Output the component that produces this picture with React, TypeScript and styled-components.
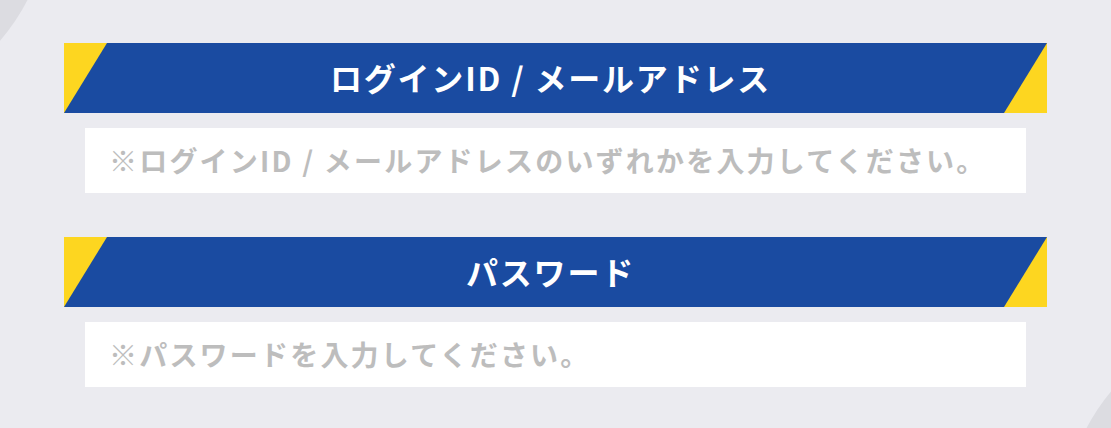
import React from "react";
import styled, { createGlobalStyle } from "styled-components";

const GlobalStyle = createGlobalStyle`
  html, body {
    margin: 0;
    padding: 0;
    background: #ebebf0;
  }
  body {
    font-family: "Noto Sans CJK JP", "Noto Sans", sans-serif;
  }
`;

const Page = styled.div`
  position: relative;
  width: 1111px;
  height: 428px;
  overflow: hidden;
  background: #ebebf0;
  box-sizing: border-box;
  padding: 43px 64px 0 64px;
  display: flex;
  flex-direction: column;
  gap: 44px;

  /* soft decorative discs peeking in at opposite corners */
  &::before,
  &::after {
    content: "";
    position: absolute;
    width: 398px;
    height: 398px;
    border-radius: 50%;
    background: #dcdce1;
  }
  &::before {
    left: -349px;
    top: -289px;
  }
  &::after {
    left: 1064px;
    top: 321px;
  }
`;

const Field = styled.div`
  position: relative;
  z-index: 1;
  display: flex;
  flex-direction: column;
  gap: 15px;
`;

const Heading = styled.label`
  position: relative;
  height: 70px;
  background: #1a4ba1;
  color: #ffffff;
  display: flex;
  align-items: center;
  justify-content: center;
  padding-right: 10px;
  font-size: 32px;
  font-weight: 700;
  letter-spacing: 1.8px;
  overflow: hidden;

  &::before,
  &::after {
    content: "";
    position: absolute;
    width: 43px;
    height: 70px;
    background: #fdd620;
  }
  &::before {
    left: 0;
    top: 0;
    clip-path: polygon(0 0, 100% 0, 0 100%);
  }
  &::after {
    right: 0;
    top: 0;
    clip-path: polygon(100% 0, 100% 100%, 0 100%);
  }
`;

const HeadingText = styled.span`
  position: relative;
  top: -1px;
`;

const InputRow = styled.div`
  padding: 0 21px;
`;

const TextInput = styled.input`
  display: block;
  width: 100%;
  height: 65px;
  box-sizing: border-box;
  border: none;
  outline: none;
  background: #ffffff;
  padding: 0 0 1px 24px;
  font-family: "Noto Sans CJK JP", "Noto Sans", sans-serif;
  font-size: 28px;
  font-weight: 700;
  letter-spacing: 2.2px;
  color: #333;

  &::placeholder {
    color: #bdbdbd;
  }
`;

export default function App() {
  return (
    <>
      <GlobalStyle />
      <Page>
        <Field>
          <Heading htmlFor="login-id">
            <HeadingText>ログインID / メールアドレス</HeadingText>
          </Heading>
          <InputRow>
            <TextInput
              id="login-id"
              type="text"
              placeholder="※ログインID / メールアドレスのいずれかを入力してください。"
            />
          </InputRow>
        </Field>
        <Field>
          <Heading htmlFor="password">
            <HeadingText>パスワード</HeadingText>
          </Heading>
          <InputRow>
            <TextInput
              id="password"
              type="password"
              placeholder="※パスワードを入力してください。"
            />
          </InputRow>
        </Field>
      </Page>
    </>
  );
}
